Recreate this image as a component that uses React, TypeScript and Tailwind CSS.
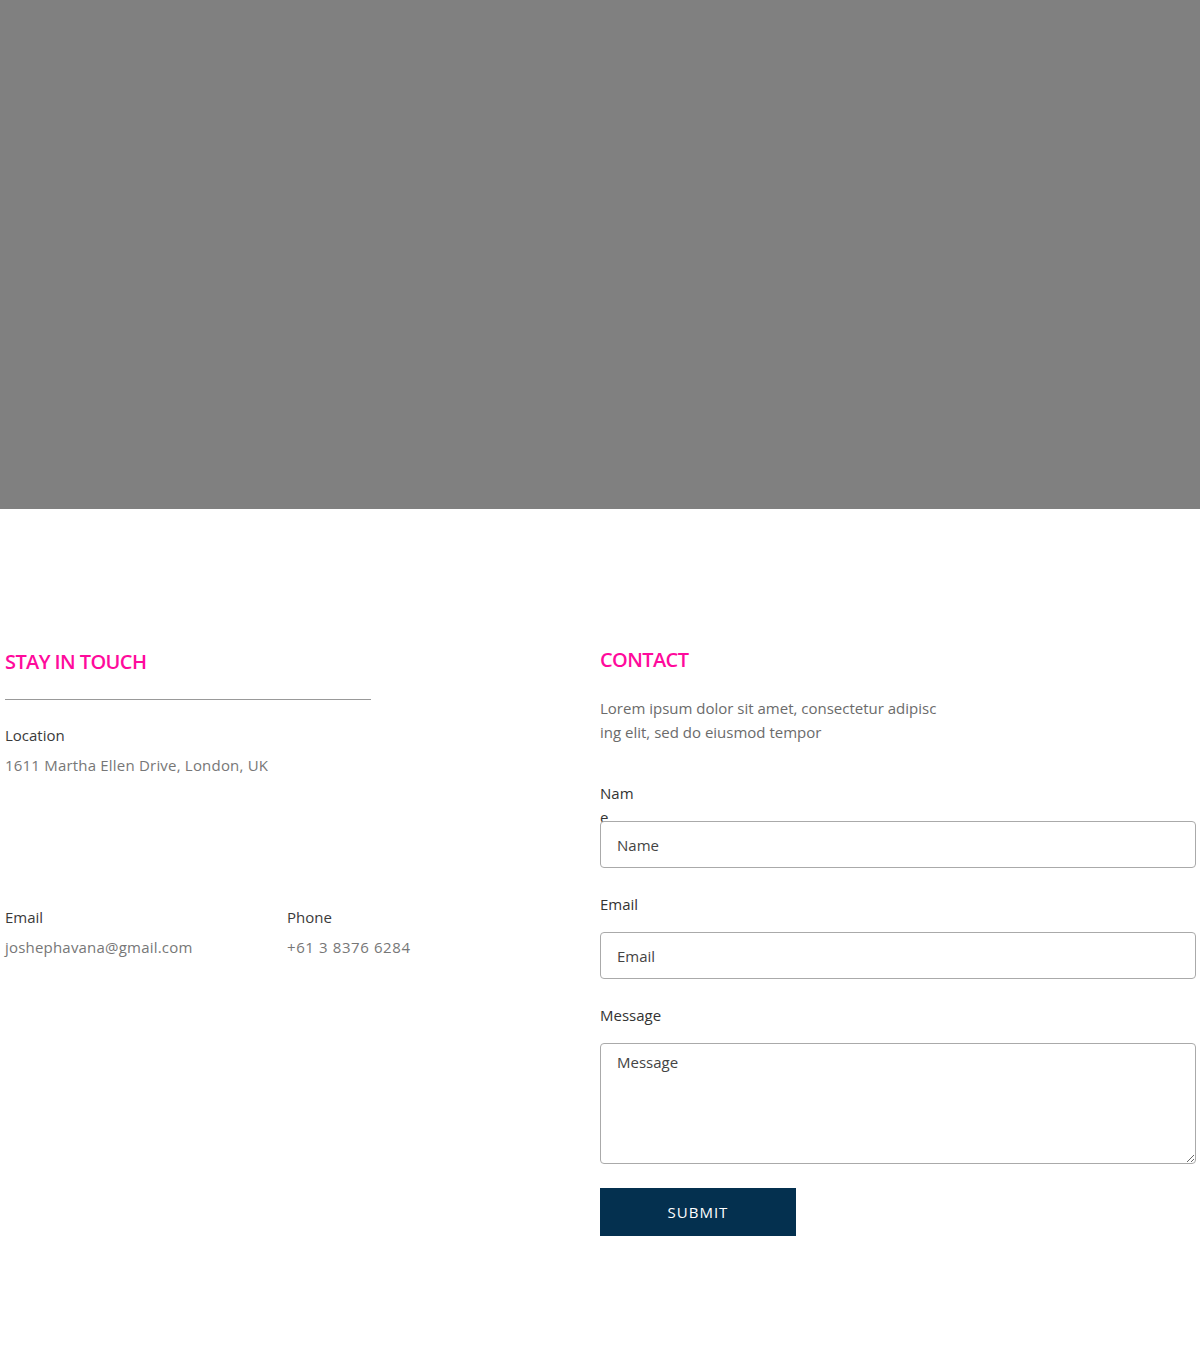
import React from "react";

const font = { fontFamily: "'Open Sans', 'Noto Sans', sans-serif" };

export default function App() {
  return (
    <div className="w-[1200px] min-h-[1354px] bg-white" style={font}>
      <div className="h-[509px] bg-[#808080]" />
      <div className="flex pt-[137px] pb-[118px]">
        <div className="w-[600px] pl-[5px] pt-[2px]">
          <h2 className="text-[20px] leading-[28px] font-semibold text-[#ff0a9c] tracking-[-0.6px]">STAY IN TOUCH</h2>
          <div className="mt-[23px] h-px w-[366px] bg-[#999]" />
          <div className="mt-[23px] text-[15px] leading-[24px] text-[#3a3a3a]">Location</div>
          <div className="mt-[6px] text-[15px] leading-[24px] tracking-[0.2px] text-[#777]">1611 Martha Ellen Drive, London, UK</div>
          <div className="mt-[128px] flex">
            <div className="w-[282px]">
              <div className="text-[15px] leading-[24px] text-[#3a3a3a]">Email</div>
              <div className="mt-[6px] text-[15px] leading-[24px] tracking-[0.2px] text-[#777]">joshephavana@gmail.com</div>
            </div>
            <div>
              <div className="text-[15px] leading-[24px] text-[#3a3a3a]">Phone</div>
              <div className="mt-[6px] text-[15px] leading-[24px] tracking-[0.6px] text-[#777]">+61 3 8376 6284</div>
            </div>
          </div>
        </div>
        <div className="w-[596px]">
          <h2 className="text-[20px] leading-[28px] font-semibold text-[#ff0a9c] tracking-[-0.6px]">CONTACT</h2>
          <p className="mt-[22px] text-[15px] leading-[24px] text-[#6b6b6b]">
            Lorem ipsum dolor sit amet, consectetur adipisc
            <br />
            ing elit, sed do eiusmod tempor
          </p>
          <form className="mt-[37px] flex flex-col">
            <label className="block h-[24px] text-[15px] leading-[24px] text-[#333]">
              Nam
              <br />
              e
            </label>
            <input
              placeholder="Name"
              className="relative mt-[16px] h-[47px] w-full rounded-[4px] border border-[#aaa] bg-white px-[16px] text-[15px] text-[#444] placeholder:text-[#444] outline-none"
            />
            <label className="mt-[24px] block h-[24px] text-[15px] leading-[24px] text-[#333]">Email</label>
            <input
              placeholder="Email"
              className="mt-[16px] h-[47px] w-full rounded-[4px] border border-[#aaa] bg-white px-[16px] text-[15px] text-[#444] placeholder:text-[#444] outline-none"
            />
            <label className="mt-[24px] block h-[24px] text-[15px] leading-[24px] text-[#333]">Message</label>
            <textarea
              placeholder="Message"
              className="mt-[16px] h-[121px] w-full rounded-[4px] border border-[#aaa] bg-white px-[16px] py-[6px] text-[15px] leading-[24px] text-[#444] placeholder:text-[#444] outline-none"
            />
            <button
              type="button"
              className="mt-[24px] h-[48px] w-[196px] bg-[#04304f] text-[15px] tracking-[1px] text-white"
            >
              SUBMIT
            </button>
          </form>
        </div>
      </div>
    </div>
  );
}
